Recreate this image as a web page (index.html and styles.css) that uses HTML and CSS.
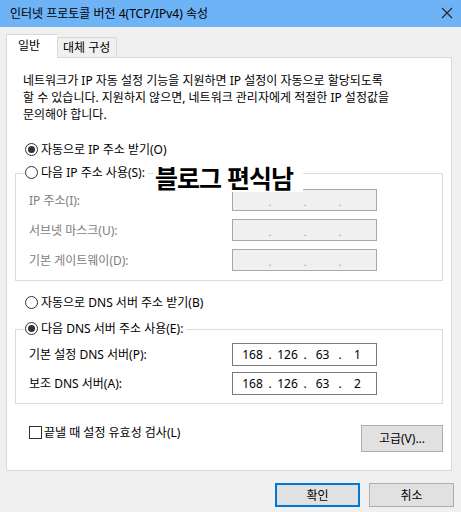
FILE: index.html
```html
<!DOCTYPE html>
<html lang="ko">
<head>
    <meta charset="UTF-8">
    <title>인터넷 프로토콜 버전 4(TCP/IPv4) 속성</title>
    <link rel="stylesheet" href="styles.css">
</head>
<body>
    <div class="window">
        <!-- 제목 표시줄 -->
        <div class="titlebar">
            <span>인터넷 프로토콜 버전 4(TCP/IPv4) 속성</span>
            <svg class="close" width="12" height="12" viewBox="0 0 12 12">
                <path d="M1 1L11 11M11 1L1 11" stroke="#222" stroke-width="1.1" fill="none"/>
            </svg>
        </div>

        <!-- 탭 -->
        <div class="tabs">
            <div class="tab active">일반</div>
            <div class="tab">대체 구성</div>
        </div>

        <div class="panel">
            <p class="desc">네트워크가 IP 자동 설정 기능을 지원하면 IP 설정이 자동으로 할당되도록<br>할 수 있습니다. 지원하지 않으면, 네트워크 관리자에게 적절한 IP 설정값을<br>문의해야 합니다.</p>

            <div class="option first">
                <span class="radio checked"></span>자동으로 IP 주소 받기(O)
            </div>

            <div class="group ip-group">
                <div class="group-head">
                    <span class="radio"></span>다음 IP 주소 사용(S):
                </div>
                <div class="row disabled">
                    <span class="label">IP 주소(I):</span>
                    <div class="ipbox"><span class="seg"></span><span class="dot">.</span><span class="seg"></span><span class="dot">.</span><span class="seg"></span><span class="dot">.</span><span class="seg"></span></div>
                </div>
                <div class="row disabled">
                    <span class="label">서브넷 마스크(U):</span>
                    <div class="ipbox"><span class="seg"></span><span class="dot">.</span><span class="seg"></span><span class="dot">.</span><span class="seg"></span><span class="dot">.</span><span class="seg"></span></div>
                </div>
                <div class="row disabled">
                    <span class="label">기본 게이트웨이(D):</span>
                    <div class="ipbox"><span class="seg"></span><span class="dot">.</span><span class="seg"></span><span class="dot">.</span><span class="seg"></span><span class="dot">.</span><span class="seg"></span></div>
                </div>
            </div>

            <div class="option dns-auto">
                <span class="radio"></span>자동으로 DNS 서버 주소 받기(B)
            </div>

            <div class="group dns-group">
                <div class="group-head">
                    <span class="radio checked"></span>다음 DNS 서버 주소 사용(E):
                </div>
                <div class="row">
                    <span class="label">기본 설정 DNS 서버(P):</span>
                    <div class="ipbox"><span class="seg">168</span><span class="dot">.</span><span class="seg">126</span><span class="dot">.</span><span class="seg">63</span><span class="dot">.</span><span class="seg">1</span></div>
                </div>
                <div class="row">
                    <span class="label">보조 DNS 서버(A):</span>
                    <div class="ipbox"><span class="seg">168</span><span class="dot">.</span><span class="seg">126</span><span class="dot">.</span><span class="seg">63</span><span class="dot">.</span><span class="seg">2</span></div>
                </div>
            </div>

            <div class="footer-row">
                <div class="check-line"><span class="checkbox"></span>끝낼 때 설정 유효성 검사(L)</div>
                <button class="btn advanced">고급(V)...</button>
            </div>

            <!-- 블로그 워터마크 -->
            <div class="watermark">블로그 편식남</div>
        </div>

        <div class="actions">
            <button class="btn default">확인</button>
            <button class="btn">취소</button>
        </div>
    </div>
</body>
</html>
```

FILE: styles.css
```css
body {
    margin: 0;
    background: #f0f0f0;
    font-family: "Noto Sans", "Noto Sans CJK KR", sans-serif;
    font-size: 12px;
    line-height: 17px;
    color: #000;
}
.window {
    width: 461px;
    height: 512px;
    overflow: hidden;
}
.titlebar {
    height: 27px;
    background: #6eb3f5;
    display: flex;
    align-items: center;
    justify-content: space-between;
    padding: 0 8px 0 10px;
}
.close {
    margin-top: -1px;
}
.tabs {
    display: flex;
    align-items: flex-end;
    height: 30px;
    padding-left: 6px;
}
.tab {
    box-sizing: border-box;
    height: 20px;
    padding: 1px 0 0 5px;
    width: 60px;
    border: 1px solid #d9d9d9;
    border-bottom: none;
    background: #f0f0f0;
}
.tab.active {
    position: relative;
    z-index: 1;
    width: 51px;
    height: 24px;
    padding: 2px 0 0 11px;
    background: #fff;
    margin-bottom: -1px;
    border-right: none;
}
.panel {
    position: relative;
    box-sizing: border-box;
    margin-left: 6px;
    width: 446px;
    height: 414px;
    background: #fff;
    border: 1px solid #d9d9d9;
    padding: 14px 8px 0 8px;
}
.desc {
    margin: 0 8px;
}
.option {
    display: flex;
    align-items: center;
    height: 17px;
    margin-left: 10px;
}
.option.first {
    margin-top: 18px;
}
.radio {
    box-sizing: border-box;
    width: 13px;
    height: 13px;
    border: 1px solid #333;
    border-radius: 50%;
    margin-right: 3px;
    display: inline-flex;
    align-items: center;
    justify-content: center;
    background: #fff;
}
.radio.checked::after {
    content: "";
    width: 7px;
    height: 7px;
    border-radius: 50%;
    background: #333;
}
.group {
    border: 1px solid #dcdcdc;
    padding-bottom: 9px;
}
.ip-group {
    margin-top: 15px;
}
.group-head {
    display: flex;
    align-items: center;
    width: fit-content;
    height: 17px;
    margin: -10px 0 0 9px;
    padding-right: 3px;
    background: #fff;
}
.row {
    display: flex;
    align-items: center;
    height: 22px;
    margin-top: 8px;
}
.ip-group .row:first-of-type {
    margin-top: 9px;
}
.label {
    width: 203px;
    padding-left: 13px;
}
.ipbox {
    box-sizing: border-box;
    width: 145px;
    height: 100%;
    border: 1px solid #7a7a7a;
    display: flex;
    align-items: center;
    padding-left: 4px;
}
.seg {
    width: 31px;
    text-align: center;
}
.dot {
    width: 4px;
    text-align: center;
}
.disabled .label {
    color: #7d7d7d;
}
.disabled .ipbox {
    background: #f0f0f0;
    border-color: #a8a8a8;
    color: #9a9a9a;
    font-size: 10px;
    line-height: 12px;
    padding-top: 3px;
}
.dns-auto {
    margin-top: 13px;
}
.dns-group {
    margin-top: 18px;
    padding-bottom: 8px;
}
.dns-group .row {
    height: 23px;
    margin-top: 6px;
}
.dns-group .row:first-of-type {
    margin-top: 7px;
}
.footer-row {
    display: flex;
    justify-content: space-between;
    align-items: flex-start;
    margin-top: 20px;
}
.check-line {
    display: flex;
    align-items: center;
    margin-left: 14px;
}
.checkbox {
    box-sizing: border-box;
    width: 13px;
    height: 13px;
    border: 1px solid #333;
    margin-right: 2px;
}
.btn {
    box-sizing: border-box;
    font: inherit;
    background: #e1e1e1;
    border: 1px solid #adadad;
    color: #000;
    padding: 0;
}
.advanced {
    width: 82px;
    height: 27px;
    margin-top: 1px;
}
.actions {
    display: flex;
    justify-content: flex-end;
    gap: 9px;
    padding: 12px 7px 0 0;
}
.actions .btn {
    width: 85px;
    height: 24px;
}
.actions .btn.default {
    border: 2px solid #0078d7;
}
.watermark {
    position: absolute;
    left: 146px;
    top: 104px;
    width: 150px;
    height: 30px;
    background: #fff;
    padding: 1px 0 0 2px;
    box-sizing: border-box;
    font-family: "Noto Sans CJK KR", sans-serif;
    font-weight: 700;
    font-size: 25px;
    letter-spacing: -1px;
    line-height: 29px;
    color: #000;
}
```
